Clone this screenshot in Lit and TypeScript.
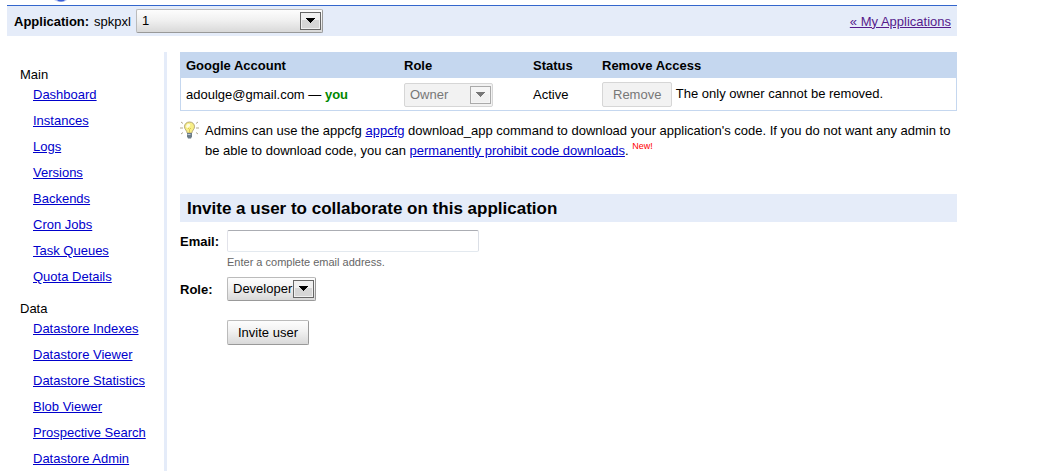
import { LitElement, html, css } from "lit";
import { customElement } from "lit/decorators.js";

interface DropDownOptions {
  id: string;
  value: string;
  size: string;
  label?: string;
  disabled?: boolean;
}

interface NavGroup {
  title: string;
  links: string[];
}

const groups: NavGroup[] = [
  {
    title: "Main",
    links: ["Dashboard", "Instances", "Logs", "Versions", "Backends", "Cron Jobs", "Task Queues", "Quota Details"],
  },
  {
    title: "Data",
    links: [
      "Datastore Indexes",
      "Datastore Viewer",
      "Datastore Statistics",
      "Blob Viewer",
      "Prospective Search",
      "Datastore Admin",
    ],
  },
];

@customElement("app-root")
export class AppRoot extends LitElement {
  static styles = css`
    :host {
      display: flex;
      flex-direction: column;
      box-sizing: border-box;
      min-height: 100vh;
      padding: 0 87px 0 7px;
      background: #fff;
      color: #000;
      font: 13px/20px "Liberation Sans", Arial, sans-serif;
    }
    a {
      color: #00c;
    }
    select,
    input,
    button {
      box-sizing: border-box;
      margin: 0;
      font: inherit;
      color: #000;
      border-radius: 2px;
    }
    select,
    button {
      border: 1px solid;
      border-color: #bbb #999 #999 #bbb;
      background: linear-gradient(#fdfdfd, #f1f1f1 45%, #d9d9d9);
    }
    select:disabled,
    button:disabled {
      color: #777;
      border-color: #d6d6d6;
      background: #f2f2f2;
      opacity: 1;
    }
    .drop-down {
      display: inline-grid;
      align-items: center;
      height: 24px;
      vertical-align: middle;
    }
    .wide {
      width: 187px;
    }
    .narrow {
      width: 89px;
    }
    .drop-down select {
      grid-area: 1 / 1;
      appearance: none;
      width: 100%;
      height: 100%;
      padding: 0 22px 0 5px;
    }
    .drop-down svg {
      grid-area: 1 / 1;
      justify-self: end;
      margin-right: 2px;
      pointer-events: none;
    }
    .frame {
      fill: #f0f0f0;
      stroke: #666;
    }
    .shade {
      fill: #d6d6d6;
    }
    .off .frame {
      fill: #f5f5f5;
      stroke: #aaa;
    }
    .off .shade {
      fill: #f0f0f0;
    }
    .off .arrow {
      fill: #777;
    }
    .logo {
      display: block;
      height: 5px;
      margin-left: 46px;
    }
    .topbar {
      display: flex;
      align-items: center;
      height: 30px;
      padding: 0 6px 0 7px;
      border-top: 1px solid #36c;
      background: #e5ecf9;
    }
    .app-name {
      margin: 0 5px;
    }
    .topbar label,
    .app-name,
    .back {
      padding-top: 1px;
    }
    .back {
      margin-left: auto;
      color: #551a8b;
    }
    .body {
      display: flex;
      flex: 1;
      margin-top: 16px;
    }
    nav {
      flex: none;
      box-sizing: border-box;
      width: 160px;
      padding: 16px 0 0 13px;
      border-right: 3px solid #e5ecf9;
    }
    .group {
      margin-bottom: 12px;
    }
    .group:last-child {
      margin-bottom: -1px;
    }
    .group-title {
      margin: 0;
      font: inherit;
      line-height: 14px;
    }
    ul {
      margin: 0;
      padding: 0 0 0 13px;
      list-style: none;
    }
    li {
      line-height: 26px;
    }
    main {
      flex: 1;
      min-width: 0;
      padding-left: 13px;
    }
    table {
      width: 100%;
      border: 1px solid #c5d7ef;
      border-spacing: 0;
      table-layout: fixed;
    }
    th,
    td {
      box-sizing: border-box;
      padding: 0 5px;
      text-align: left;
    }
    th {
      height: 25px;
      background: #c5d7ef;
    }
    td {
      height: 32px;
      padding-top: 1px;
    }
    .col-account {
      width: 218px;
    }
    .col-role {
      width: 129px;
    }
    .col-status {
      width: 69px;
    }
    .you {
      color: #080;
    }
    .push {
      height: 25px;
      padding: 0 10px;
    }
    .remove {
      vertical-align: middle;
    }
    .tip {
      display: flex;
      gap: 6px;
      margin-top: 10px;
    }
    .tip svg {
      flex: none;
    }
    .tip p {
      margin: 0;
    }
    .new {
      color: #f00;
      font-size: 9px;
      line-height: 0;
      vertical-align: 6px;
    }
    h2 {
      margin: 33px 0 8px;
      padding: 1px 7px 0;
      background: #e5ecf9;
      font-size: 17px;
      line-height: 27px;
    }
    form {
      display: grid;
      grid-template-columns: 47px 1fr;
      align-items: center;
      justify-items: start;
    }
    label {
      font-weight: bold;
    }
    form label {
      padding-top: 2px;
    }
    .email {
      width: 252px;
      max-width: 100%;
      height: 22px;
      padding: 0 4px;
      border: 1px solid;
      border-color: #abadb3 #dbdfe6 #e3e9ef #e2e3ea;
      background: #fff;
    }
    .hint {
      grid-column: 2;
      color: #666;
      font-size: 11px;
      margin-bottom: 5px;
    }
    .submit {
      grid-column: 2;
      margin-top: 19px;
    }
  `;

  private renderDropDown({ id, value, size, label, disabled = false }: DropDownOptions) {
    return html`<span class="drop-down ${size} ${disabled ? "off" : ""}">
      <select id=${id} aria-label=${label ?? value} ?disabled=${disabled}>
        <option>${value}</option>
      </select>
      <svg width="21" height="18" viewBox="0 0 21 18" aria-hidden="true">
        <rect class="frame" x=".5" y=".5" width="20" height="17" />
        <rect class="shade" x="2" y="8" width="17" height="8" />
        <path class="arrow" d="M6 6h9v1h-1v1h-1v1h-1v1h-1v1h-1v-1H9V9H8V8H7V7H6z" />
      </svg>
    </span>`;
  }

  private renderGroup(group: NavGroup) {
    return html`
      <section class="group">
        <h3 class="group-title">${group.title}</h3>
        <ul>
          ${group.links.map((link) => html`<li><a href="#">${link}</a></li>`)}
        </ul>
      </section>
    `;
  }

  render() {
    return html`
      <svg class="logo" width="16" height="5" viewBox="0 0 16 5" aria-hidden="true">
        <path d="M1 0h13q-2 2-6 2T1 0z" fill="#b9c8f2" />
        <path d="M4 0h8q-1 1.500-4 1.500T4 0z" fill="#3a5fd9" />
      </svg>
      <header class="topbar">
        <label for="application">Application:</label>
        <span class="app-name">spkpxl</span>
        ${this.renderDropDown({ id: "application", value: "1", size: "wide", label: "Application" })}
        <a class="back" href="#">« My Applications</a>
      </header>
      <div class="body">
        <nav>${groups.map((group) => this.renderGroup(group))}</nav>
        <main>
          <table>
            <thead>
              <tr>
                <th class="col-account">Google Account</th>
                <th class="col-role">Role</th>
                <th class="col-status">Status</th>
                <th>Remove Access</th>
              </tr>
            </thead>
            <tbody>
              <tr>
                <td>adoulge@gmail.com — <strong class="you">you</strong></td>
                <td>
                  ${this.renderDropDown({ id: "owner", value: "Owner", size: "narrow", label: "Role", disabled: true })}
                </td>
                <td>Active</td>
                <td><button class="push remove" disabled>Remove</button> The only owner cannot be removed.</td>
              </tr>
            </tbody>
          </table>
          <div class="tip">
            <svg width="19" height="18" viewBox="0 0 19 18" aria-hidden="true">
              <path
                d="M1 1l2 1.500M0 7h3M1 13l2-1.500M18 1l-2 1.500M19 7h-3M18 13l-2-1.500"
                fill="none"
                stroke="#b0a890"
              />
              <path
                d="M9.500 1C6.500 1 4.500 3 4.500 5.800c0 2.500 2.300 3.500 2.700 6.200h4.600c.4-2.700 2.700-3.700 2.700-6.200C14.500 3 12.500 1 9.500 1z"
                fill="#f8ef86"
                stroke="#b5a878"
              />
              <path d="M7 3.500q2-1.500 3 0T7.500 7Q5 6 7 3.500z" fill="#fffde0" />
              <path d="M8 7l1.500 1.500L11 7M9.500 8.500V12" fill="none" stroke="#dcc45a" />
              <path d="M7 12h5v3.500L11 17.500H8L7 15.500z" fill="#6d7d89" />
              <path d="M7.500 13.500h3" stroke="#c3ccd2" />
            </svg>
            <p>
              Admins can use the appcfg <a href="#">appcfg</a> download_app command to download your application's
              code. If you do not want any admin to be able to download code, you can
              <a href="#">permanently prohibit code downloads</a>. <span class="new">New!</span>
            </p>
          </div>
          <h2>Invite a user to collaborate on this application</h2>
          <form>
            <label for="email">Email:</label>
            <input class="email" id="email" type="email" aria-describedby="email-hint" />
            <span class="hint" id="email-hint">Enter a complete email address.</span>
            <label for="role">Role:</label>
            ${this.renderDropDown({ id: "role", value: "Developer", size: "narrow", label: "Role" })}
            <button class="push submit" type="button">Invite user</button>
          </form>
        </main>
      </div>
    `;
  }
}
